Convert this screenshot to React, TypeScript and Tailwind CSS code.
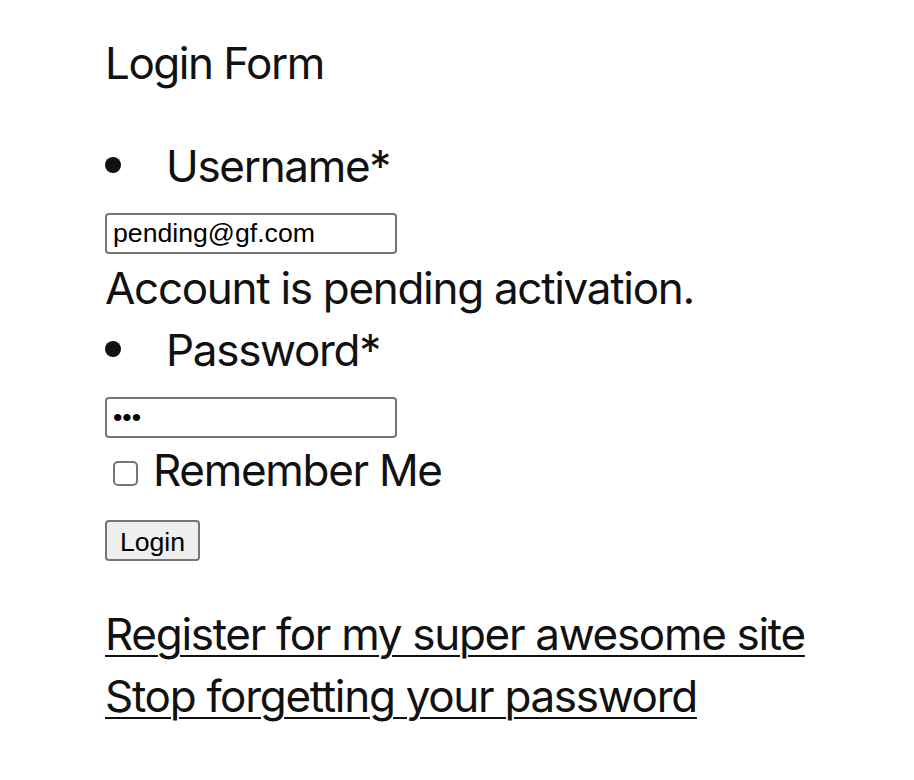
export default function App() {
  return (
    <div
      className="min-h-screen bg-white pl-[105px] pt-[33px] text-[#111] tracking-[-1.3px]"
      style={{ fontFamily: 'Inter, "Noto Sans", sans-serif' }}
    >
      <h2 className="text-[44px] leading-[61.6px] font-normal tracking-[-1.5px]">Login Form</h2>

      <form className="mt-[41px]" onSubmit={(e) => e.preventDefault()}>
        <div className="flex">
          <span className="mt-[21px] h-[16px] w-[16px] shrink-0 rounded-full bg-[#111]"></span>
          <label htmlFor="user" className="ml-[45px] text-[44px] leading-[61.6px]">
            Username*
          </label>
        </div>
        <input
          id="user"
          type="text"
          readOnly
          value="pending@gf.com"
          className="mt-[16px] block h-[41px] w-[292px] rounded-[4px] border-2 border-[#767676] bg-white px-[6px] text-[26.67px] tracking-normal text-black outline-none"
          style={{ fontFamily: '"Liberation Sans", Arial, sans-serif' }}
        />
        <p className="mt-[4px] text-[44px] leading-[61.6px]">Account is pending activation.</p>

        <div className="flex">
          <span className="mt-[21px] h-[16px] w-[16px] shrink-0 rounded-full bg-[#111]"></span>
          <label htmlFor="pass" className="ml-[45px] text-[44px] leading-[61.6px]">
            Password*
          </label>
        </div>
        <input
          id="pass"
          type="password"
          readOnly
          value="abc"
          className="mt-[16px] block h-[41px] w-[292px] rounded-[4px] border-2 border-[#767676] bg-white px-[6px] text-[26.67px] tracking-normal text-black outline-none"
          style={{ fontFamily: '"Liberation Sans", Arial, sans-serif' }}
        />

        <div className="mt-[2px] flex items-center">
          <input
            id="remember"
            type="checkbox"
            className="ml-[8px] mt-[4px] h-[25px] w-[25px] shrink-0 appearance-none rounded-[5px] border-2 border-[#767676] bg-white"
          />
          <label htmlFor="remember" className="ml-[15px] text-[44px] leading-[61.6px]">
            Remember Me
          </label>
        </div>

        <button
          type="submit"
          className="mt-[18px] block h-[41px] w-[95px] rounded-[4px] border-2 border-[#767676] bg-[#efefef] text-[26.67px] tracking-normal text-black"
          style={{ fontFamily: '"Liberation Sans", Arial, sans-serif' }}
        >
          Login
        </button>
      </form>

      <div className="mt-[43px] flex flex-col items-start text-[44px] leading-[61.6px]">
        <a href="#" className="underline decoration-[2px] underline-offset-[5px]">
          Register for my super awesome site
        </a>
        <a href="#" className="underline decoration-[2px] underline-offset-[5px]">
          Stop forgetting your password
        </a>
      </div>
    </div>
  );
}
